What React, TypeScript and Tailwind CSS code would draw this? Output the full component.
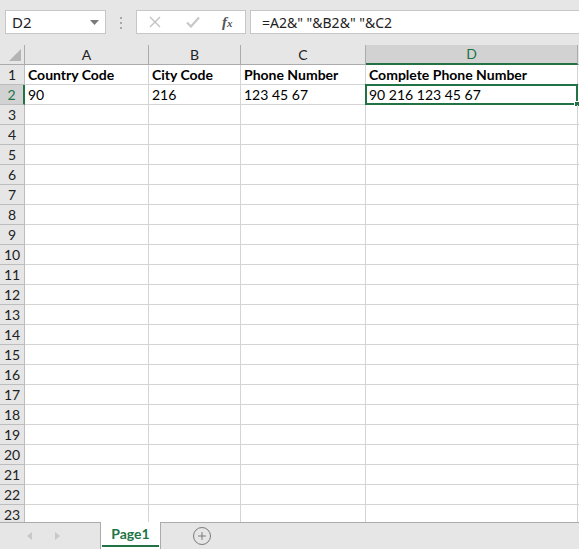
import { Plus } from "lucide-react";

const cols = [
  { key: "A", w: "w-[124px]" },
  { key: "B", w: "w-[92px]" },
  { key: "C", w: "w-[125px]" },
  { key: "D", w: "w-[212px]" },
];

const data: Record<number, string[]> = {
  1: ["Country Code", "City Code", "Phone Number", "Complete Phone Number"],
  2: ["90", "216", "123 45 67", "90 216 123 45 67"],
};

const rows = Array.from({ length: 23 }, (_, i) => i + 1);

function FormulaBar() {
  return (
    <div className="flex h-[45px] shrink-0 items-start bg-[#e6e6e6] pt-[10px]">
      <div className="ml-[5px] flex h-[24px] w-[101px] items-center justify-between border border-[#c6c6c6] bg-white pl-[6px] pr-[6px] text-[15px] text-[#222]">
        <span className="font-['Noto_Sans',sans-serif] leading-none">D2</span>
        <svg width="9" height="5" viewBox="0 0 9 5">
          <path d="M0 0h9L4.5 5z" fill="#7a7a7a" />
        </svg>
      </div>
      <div className="ml-[13px] mt-[7px] flex w-[4px] flex-col items-center gap-[3px]">
        <span className="h-[2px] w-[2px] bg-[#a8a8a8]" />
        <span className="h-[2px] w-[2px] bg-[#a8a8a8]" />
        <span className="h-[2px] w-[2px] bg-[#a8a8a8]" />
      </div>
      <div className="ml-[13px] flex h-[24px] w-[110px] items-center border border-[#c6c6c6] bg-white">
        <svg className="ml-[12px]" width="12" height="12" viewBox="0 0 12 12">
          <path d="M1 1l10 10M11 1L1 11" stroke="#c2c2c2" strokeWidth="1.4" />
        </svg>
        <svg className="ml-[25px]" width="14" height="12" viewBox="0 0 14 12">
          <path d="M1 6.5l4 4L13 1.5" stroke="#c8c8c8" strokeWidth="2.2" fill="none" />
        </svg>
        <span className="ml-[22px] font-['Liberation_Serif',serif] text-[15px] font-bold italic leading-none text-[#555]">
          f<span className="text-[11px]">x</span>
        </span>
      </div>
      <div className="ml-[4px] flex h-[24px] flex-1 items-center border-y border-l border-[#c6c6c6] bg-white pl-[11px] font-['Noto_Sans',sans-serif] text-[14px] text-[#222]">
        =A2&amp;" "&amp;B2&amp;" "&amp;C2
      </div>
    </div>
  );
}

function Grid() {
  return (
    <div className="flex-1 overflow-hidden bg-white font-['Lato',sans-serif] text-[14px] text-black">
      <div className="flex h-[20px] bg-[#e6e6e6]">
        <div className="relative w-[25px] shrink-0 border-r border-b border-[#ababab]">
          <svg className="absolute bottom-[3px] right-[3px]" width="12" height="12" viewBox="0 0 12 12">
            <path d="M12 0v12H0z" fill="#b4b4b4" />
          </svg>
        </div>
        {cols.map((c) =>
          c.key === "D" ? (
            <div
              key={c.key}
              className={`${c.w} shrink-0 border-r border-[#ababab] bg-[#d2d2d2] text-center leading-[18px] text-[#217346] border-b-2 border-b-[#217346]`}
            >
              {c.key}
            </div>
          ) : (
            <div
              key={c.key}
              className={`${c.w} shrink-0 border-r border-b border-[#ababab] text-center leading-[19px] text-[#222]`}
            >
              {c.key}
            </div>
          )
        )}
        <div className="flex-1 border-b border-[#ababab]" />
      </div>
      {rows.map((r) => (
        <div key={r} className="flex h-[20px]">
          {r === 2 ? (
            <div className="w-[25px] shrink-0 border-b border-[#bdbdbd] border-r-2 border-r-[#217346] bg-[#d2d2d2] text-center leading-[19px] text-[#217346]">
              {r}
            </div>
          ) : (
            <div className="w-[25px] shrink-0 border-r border-b border-[#bdbdbd] bg-[#e6e6e6] text-center leading-[19px] text-[#222]">
              {r}
            </div>
          )}
          {cols.map((c, i) => {
            const v = data[r]?.[i] ?? "";
            const selected = r === 2 && c.key === "D";
            return (
              <div
                key={c.key}
                className={`${c.w} relative shrink-0 overflow-visible whitespace-nowrap border-r border-b border-[#d4d4d4] pl-[3px] leading-[19px] ${
                  r === 1 ? "font-bold" : ""
                }`}
              >
                {v}
                {selected && (
                  <div className="pointer-events-none absolute -left-px -top-px h-[21px] w-[213px] border-2 border-[#217346]">
                    <div className="absolute -bottom-[4px] -right-[4px] h-[6px] w-[6px] border border-white bg-[#217346]" />
                  </div>
                )}
              </div>
            );
          })}
          <div className="flex-1 border-b border-[#d4d4d4]" />
        </div>
      ))}
    </div>
  );
}

function SheetTabs() {
  return (
    <div className="flex h-[27px] shrink-0 items-stretch border-t border-[#ababab] bg-[#e6e6e6]">
      <div className="flex w-[100px] items-center pl-[27px]">
        <svg width="5" height="8" viewBox="0 0 5 8">
          <path d="M5 0v8L0 4z" fill="#c8c8c8" />
        </svg>
        <svg className="ml-[23px]" width="5" height="8" viewBox="0 0 5 8">
          <path d="M0 0v8l5-4z" fill="#c8c8c8" />
        </svg>
      </div>
      <div className="-mt-px flex w-[61px] flex-col border-x border-[#ababab] bg-white">
        <div className="flex flex-1 items-center justify-center font-['Lato',sans-serif] text-[14px] font-bold text-[#217346]">
          Page1
        </div>
        <div className="mx-[1px] mb-[2px] h-[2px] bg-[#217346]" />
      </div>
      <div className="flex items-center pl-[32px]">
        <div className="flex h-[18px] w-[18px] items-center justify-center rounded-full border-[1.5px] border-[#7a7a7a]">
          <Plus size={12} strokeWidth={2} color="#7a7a7a" />
        </div>
      </div>
    </div>
  );
}

export default function App() {
  return (
    <div className="flex h-[549px] w-[579px] flex-col overflow-hidden bg-[#e6e6e6]">
      <FormulaBar />
      <Grid />
      <SheetTabs />
    </div>
  );
}
